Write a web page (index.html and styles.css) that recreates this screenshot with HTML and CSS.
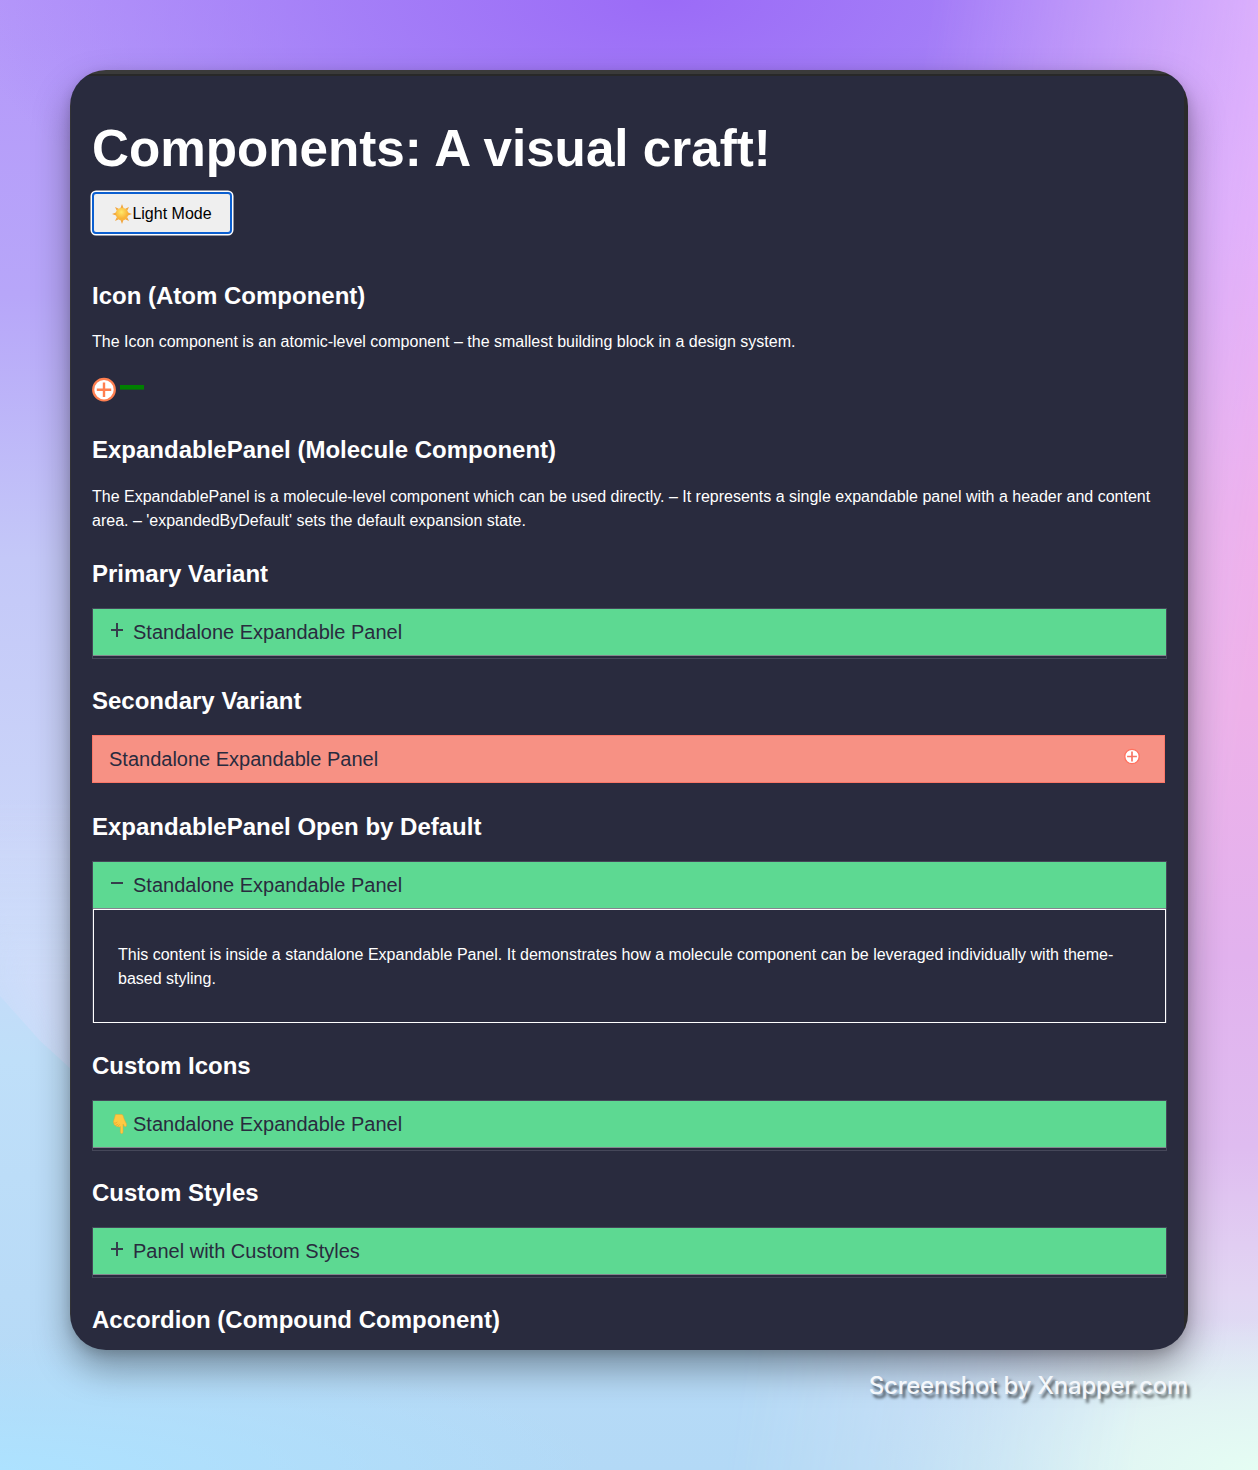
FILE: index.html
```html
<!DOCTYPE html>
<html lang="en">
<head>
<meta charset="utf-8">
<title>Components: A visual craft!</title>
<link rel="stylesheet" href="styles.css">
</head>
<body>
<main class="window">
  <h1>Components: A visual craft!</h1>
  <button class="mode">
    <svg class="sun" viewBox="0 0 20 20"><defs><radialGradient id="sg" cx=".45" cy=".35"><stop offset="0" stop-color="#ffe96a"/><stop offset="1" stop-color="#f9b43a"/></radialGradient></defs><path fill="#f1a640" d="M10 0l1.5 4h-3zM10 20l1.5-4h-3zM0 10l4-1.5v3zM20 10l-4-1.5v3zM3 3l3.8 1.8-2 2zM17 3l-3.8 1.8 2 2zM3 17l3.8-1.8-2-2zM17 17l-3.8-1.8 2-2z"/><circle cx="10" cy="10" r="6.3" fill="url(#sg)"/></svg><span>Light Mode</span>
  </button>

  <h2 class="first">Icon (Atom Component)</h2>
  <p class="intro">The Icon component is an atomic-level component – the smallest building block in a design system.</p>
  <div class="icons">
    <svg width="24" height="24" viewBox="0 0 24 24"><circle cx="12" cy="11.7" r="10.8" fill="#fff" stroke="coral" stroke-width="2.2"/><path d="M12 4.500v14.400M4.800 11.700h14.400" stroke="coral" stroke-width="2.4"/></svg>
    <svg width="24" height="24" viewBox="0 0 24 24"><path d="M0 9.300h24" stroke="green" stroke-width="4.600"/></svg>
  </div>

  <h2 class="molecule">ExpandablePanel (Molecule Component)</h2>
  <p class="about">The ExpandablePanel is a molecule-level component which can be used directly. – It represents a single expandable panel with a header and content area. – 'expandedByDefault' sets the default expansion state.</p>

  <h2 class="after-about">Primary Variant</h2>
  <section class="panel">
    <div class="head"><svg class="sign" viewBox="0 0 14 14"><path d="M7 0v14M1 7h12"/></svg><span>Standalone Expandable Panel</span></div>
  </section>

  <h2>Secondary Variant</h2>
  <section class="panel-alt">
    <span>Standalone Expandable Panel</span>
    <svg class="round" viewBox="0 0 16 16"><circle cx="8" cy="7.5" r="7.2" fill="#fff" stroke="#ff7260" stroke-width="1.3"/><path d="M8 2.600v9.800M3.100 7.500h9.800" stroke="#f87564" stroke-width="1.700"/></svg>
  </section>

  <h2 class="after-alt">ExpandablePanel Open by Default</h2>
  <section class="panel open">
    <div class="head"><svg class="sign" viewBox="0 0 14 14"><path d="M1 7h12"/></svg><span>Standalone Expandable Panel</span></div>
    <div class="content">This content is inside a standalone Expandable Panel. It demonstrates how a molecule component can be leveraged individually with theme-based styling.</div>
  </section>

  <h2 class="after-open">Custom Icons</h2>
  <section class="panel">
    <div class="head"><svg class="hand" viewBox="0 0 14 20"><path fill="#ffc942" stroke="#eda52f" stroke-width=".5" d="M2.500.4h5.700c1 0 1.500.5 1.900 1.400l1 3.200 2.200 4.500c.5 1.400.3 3.100-.8 3.200-1.200.1-1.600-1.600-2.500-2.700v8c0 2.200-2.600 2.200-2.600 0v-5.600c-1 .9-2 .7-2.500-.1-1 .6-1.900 0-2.100-.8C1.400 11.300.8 10.400.9 9.300c-.6-.5-.7-1.600-.3-2.300z"/><path d="M1.200 8.800c1.200.8 2.400 0 3.100-1M2.800 11.400c1-.2 1.800-.8 2.300-1.600M4.900 12.200c.8-.4 1.400-1 1.800-1.800" fill="none" stroke="#e39c2e" stroke-width=".7"/></svg><span>Standalone Expandable Panel</span></div>
  </section>

  <h2>Custom Styles</h2>
  <section class="panel">
    <div class="head"><svg class="sign" viewBox="0 0 14 14"><path d="M7 0v14M1 7h12"/></svg><span>Panel with Custom Styles</span></div>
  </section>

  <h2>Accordion (Compound Component)</h2>
</main>
<footer class="credit">Screenshot by Xnapper.com</footer>
</body>
</html>
```
FILE: styles.css
```css
* { box-sizing: border-box; }

body {
  margin: 0;
  padding: 70px 70px 0;
  height: 1470px;
  overflow: hidden;
  font-family: "Liberation Sans", Arial, sans-serif;
  background:
    radial-gradient(ellipse 700px 300px at 53% 0, #9b6bf7 0%, rgba(160, 120, 247, .8) 45%, rgba(170, 145, 248, 0) 100%),
    radial-gradient(ellipse 600px 130px at 0 100%, #ade2ff 0%, rgba(173, 226, 255, 0) 100%),
    linear-gradient(180deg, #b598fa 0, #b7a6f9 20%, #c4c8f8 38%, #cbd6f9 58%, #bfdff9 72%, #b9dbf7 88%, #b3d9f6 100%);
}

/* pink glow down the right side */
body::before {
  content: "";
  position: absolute;
  z-index: -1;
  top: 0;
  left: 700px;
  width: 558px;
  height: 1470px;
  background:
    radial-gradient(ellipse 380px 150px at 100% 100%, #e5fdf3 0%, rgba(228, 248, 243, .8) 45%, rgba(228, 240, 245, 0) 100%),
    linear-gradient(180deg, #e6b8fd 0, #eab4fb 15%, #f0b0ec 35%, #eeb1e9 48%, #e2b2ee 65%, #dfbcf0 78%, #e2d6f3 88%, #d9e4f5 95%, #d3e6f5 100%);
  mask-image: linear-gradient(98deg, transparent 30%, rgba(0, 0, 0, .6) 64%, #000 84%);
}

/* lavender sheet whose lower edge crosses the left margin */
body::after {
  content: "";
  position: absolute;
  z-index: -1;
  top: 800px;
  left: -20px;
  width: 100px;
  height: 280px;
  background: linear-gradient(180deg, rgba(208, 220, 252, 0), rgba(210, 221, 250, .8) 65%);
  clip-path: polygon(0 0, 100% 0, 100% 99%, 60% 86%, 20% 70%, 0 58%);
  mask-image: linear-gradient(65deg, rgba(0, 0, 0, .2) 5%, #000 45%);
}

.window {
  height: 1280px;
  padding: 49px 21px 0 22px;
  overflow: hidden;
  color: #fff;
  background:
    linear-gradient(#3a3a3a 4px, #282828 4px) 0 0 / 100% 6px no-repeat,
    linear-gradient(#2a2a2b, #2a2a2b) 100% 0 / 4px 100% no-repeat,
    linear-gradient(#333336, #333336) 0 0 / 1px 100% no-repeat,
    #292b3e;
  border-radius: 36px;
  box-shadow: 0 18px 36px rgba(0, 0, 0, .36), 0 4px 12px rgba(0, 0, 0, .14);
}

h1 {
  margin: 0 0 14px;
  font-size: 51.2px;
  line-height: 60px;
  white-space: nowrap;
}

h2 {
  margin: 28px 0 20px;
  font-size: 24px;
  line-height: 28px;
}

h2.first { margin: 48px 0 20px; }
h2.molecule { margin: 34px 0 21px; }
h2.after-about { margin-top: 27px; }
h2.after-alt { margin-top: 30px; }
h2.after-open { margin-top: 29px; }

p {
  margin: 0;
  font-size: 16px;
  line-height: 24px;
}

.intro { margin-bottom: 24px; }

.mode {
  display: flex;
  align-items: center;
  justify-content: center;
  width: 140px;
  height: 42px;
  margin-top: -1px;
  padding: 1px 0 0;
  color: #000;
  font: 16px "Liberation Sans", Arial, sans-serif;
  background: #efefef;
  border: 2px solid #0b5fd0;
  border-radius: 4px;
  box-shadow: 0 0 0 1.5px #fff;
}

.sun { width: 20px; height: 20px; }

.icons {
  display: flex;
  gap: 4px;
  height: 24px;
}

.icons svg { overflow: visible; }

.panel {
  width: 1075px;
  height: 51px;
  border: 1px solid #454759;
}

.panel.open { height: 162px; }

.head {
  display: flex;
  align-items: center;
  height: 47px;
  padding-left: 17px;
  color: #292b3e;
  font-size: 20px;
  line-height: 24px;
  background: #5dd992;
  border-bottom: 1px solid #85858f;
}

.sign {
  width: 14px;
  height: 14px;
  margin: 0 9px 4px 0;
  fill: none;
  stroke: #363e4c;
  stroke-width: 2;
}

.hand {
  width: 14px;
  height: 20px;
  margin: 0 6px 1px 3px;
}

.panel-alt {
  display: flex;
  align-items: center;
  justify-content: space-between;
  width: 1073px;
  height: 48px;
  padding: 0 24px 0 16px;
  color: #292b3e;
  font-size: 20px;
  background: #f79184;
  border: 1px solid #fb7768;
}

.round {
  width: 16px;
  height: 16px;
  margin-bottom: 5px;
  overflow: visible;
}

.content {
  height: 114px;
  padding: 33px 24px;
  font-size: 16px;
  line-height: 24px;
  border: 1px solid #fff;
}

.credit {
  margin-top: 20px;
  color: #f4f7fb;
  font: 500 24px/32px Inter, sans-serif;
  letter-spacing: -.24px;
  text-align: right;
  text-shadow: 3px 4px 3px rgba(0, 0, 0, .6);
}
```
